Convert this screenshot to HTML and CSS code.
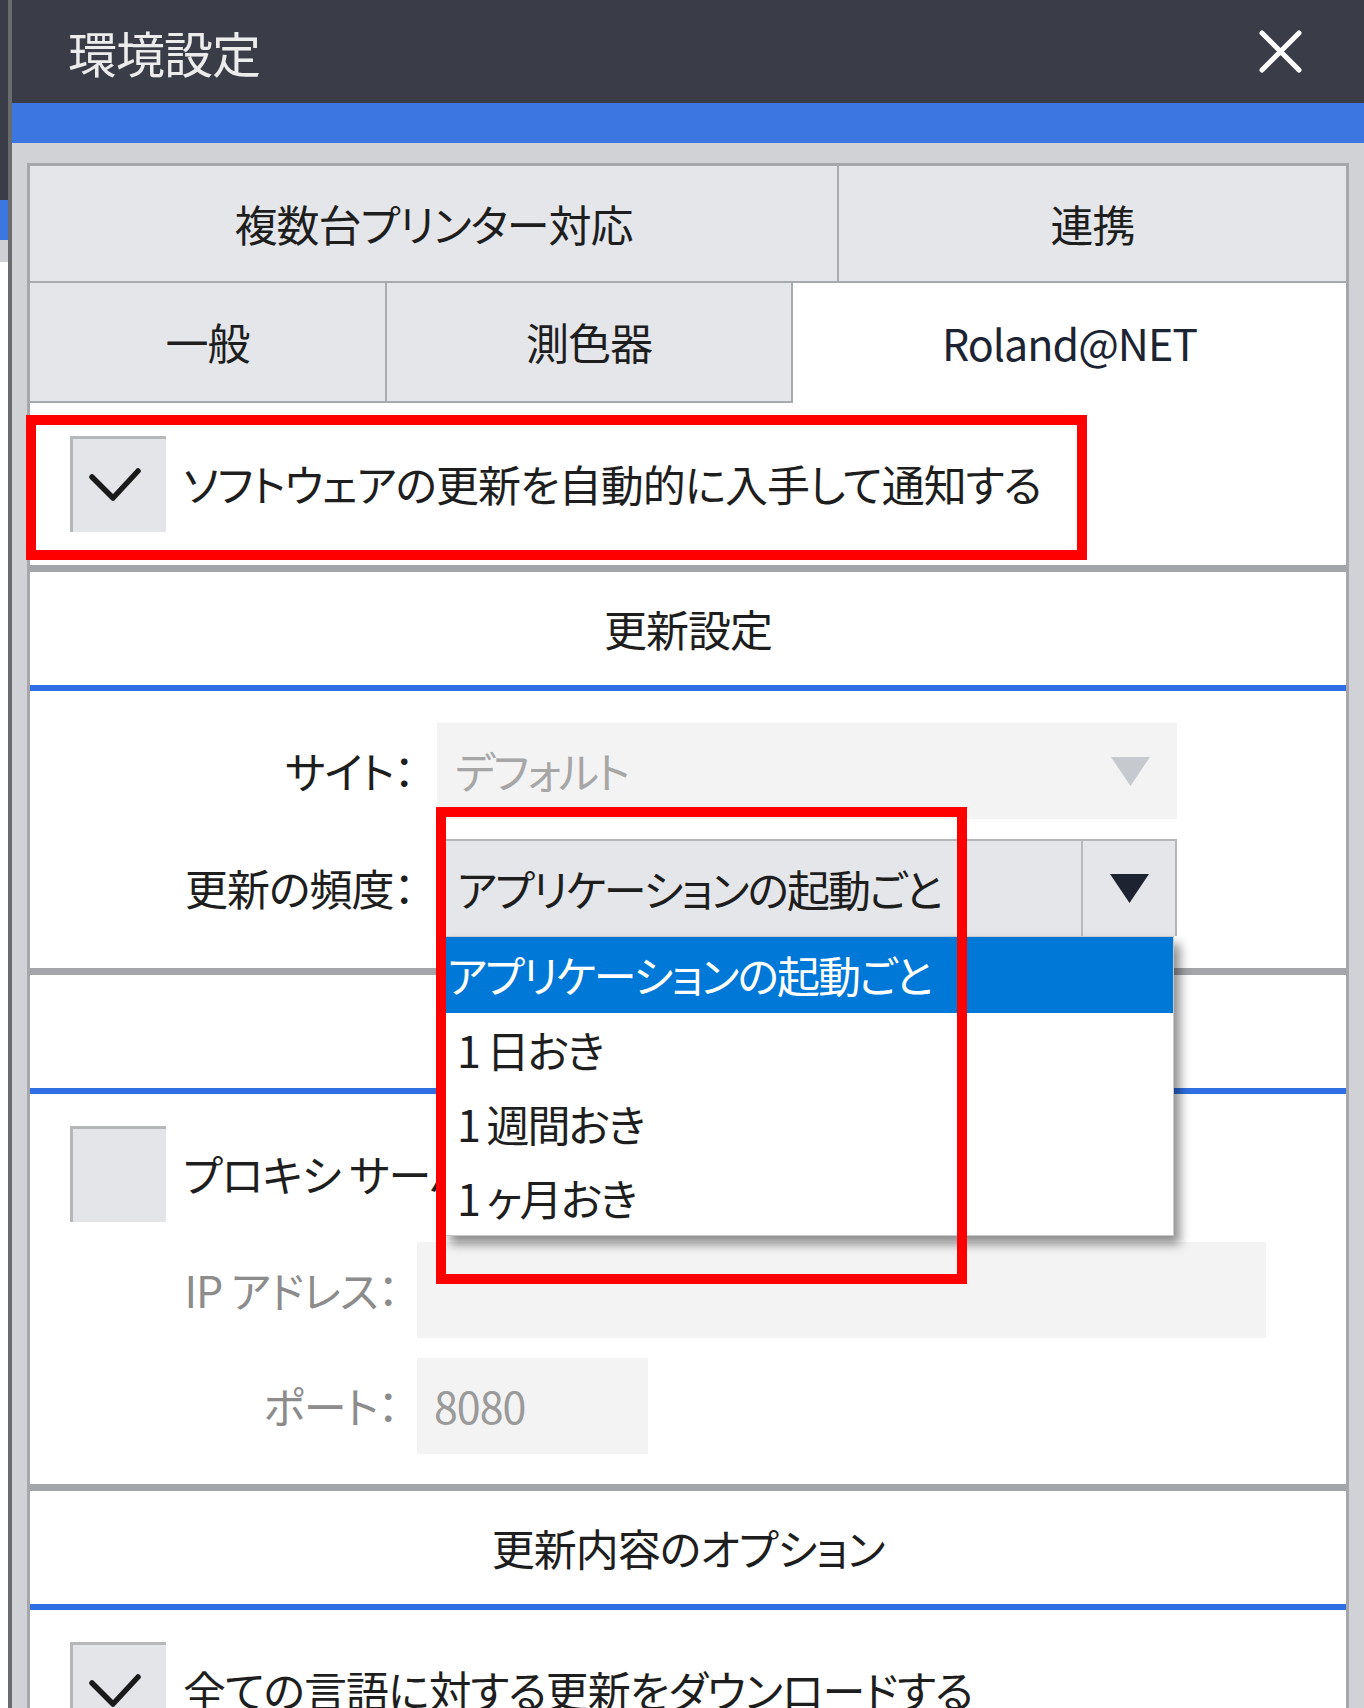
FILE: index.html
```html
<!DOCTYPE html>
<html lang="ja">
<head>
  <meta charset="UTF-8" />
  <title>環境設定</title>
  <link rel="stylesheet" href="styles.css">
</head>
<body>
  <div class="window">
    <div class="titlebar">
      <span class="title">環境設定</span>
      <svg class="close" viewBox="0 0 45 45">
        <path d="M4 4 L41 41 M41 4 L4 41" stroke="#fff" stroke-width="5" stroke-linecap="round"/>
      </svg>
    </div>
    <div class="accent"></div>

    <div class="frame">
      <div class="panel">
        <div class="tab-row row-top">
          <div class="tab">複数台プリンター対応</div>
          <div class="tab">連携</div>
        </div>
        <div class="tab-row row-bottom">
          <div class="tab">一般</div>
          <div class="tab">測色器</div>
          <div class="tab active">Roland@NET</div>
        </div>

        <div class="check-row auto-row">
          <span class="checkbox">
            <svg viewBox="0 0 96 96"><path d="M22 41 L43 62 L68 35" fill="none" stroke="#1a1a1a" stroke-width="5.5" stroke-linecap="round" stroke-linejoin="round"/></svg>
          </span>
          <span class="check-label">ソフトウェアの更新を自動的に入手して通知する</span>
          <div class="marker marker-auto"></div>
        </div>

        <section class="group">
          <h3 class="group-head">更新設定</h3>
          <div class="group-body form form-site">
            <label class="field-label">サイト：</label>
            <div class="select disabled">
              <span class="select-text">デフォルト</span>
              <svg class="arrow" viewBox="0 0 39 29"><polygon points="0,0 39,0 19.5,29" fill="#c6cacf"/></svg>
            </div>

            <label class="field-label">更新の頻度：</label>
            <div class="select-wrap">
              <div class="select open">
                <span class="select-text">アプリケーションの起動ごと</span>
                <span class="select-btn">
                  <svg class="arrow" viewBox="0 0 39 29"><polygon points="0,0 39,0 19.5,29" fill="#1d2330"/></svg>
                </span>
              </div>
              <ul class="dropdown">
                <li class="selected">アプリケーションの起動ごと</li>
                <li>1 日おき</li>
                <li>1 週間おき</li>
                <li>1 ヶ月おき</li>
              </ul>
              <div class="marker marker-freq"></div>
            </div>
          </div>
        </section>

        <section class="group">
          <h3 class="group-head">プロキシ設定</h3>
          <div class="group-body">
            <div class="check-row">
              <span class="checkbox"></span>
              <span class="check-label">プロキシ サーバーを使用する</span>
            </div>
            <div class="form form-proxy">
              <label class="field-label muted">IP アドレス：</label>
              <div class="input"></div>
              <label class="field-label muted">ポート：</label>
              <div class="input short">8080</div>
            </div>
          </div>
        </section>

        <section class="group">
          <h3 class="group-head">更新内容のオプション</h3>
          <div class="group-body">
            <div class="check-row">
              <span class="checkbox">
                <svg viewBox="0 0 96 96"><path d="M22 41 L43 62 L68 35" fill="none" stroke="#1a1a1a" stroke-width="5.5" stroke-linecap="round" stroke-linejoin="round"/></svg>
              </span>
              <span class="check-label">全ての言語に対する更新をダウンロードする</span>
            </div>
          </div>
        </section>
      </div>
    </div>
  </div>
</body>
</html>
```

FILE: styles.css
```css
* { box-sizing: border-box; }

html,
body {
  margin: 0;
  height: 1708px;
  overflow: hidden;
}

body {
  display: flex;
  background: linear-gradient(#3a3d47 0 200px, #3b76e1 200px 240px, #cfd0d3 240px 262px, #fff 262px);
  font-family: "Noto Sans CJK JP", "Noto Sans", sans-serif;
  font-feature-settings: "palt";
  font-size: 43px;
  letter-spacing: -1px;
  line-height: 1.2;
  color: #1e1e1e;
}

.window {
  flex: 1;
  margin-left: 8px;
  border-left: 4px solid #6a6b6e;
  display: flex;
  flex-direction: column;
}

.titlebar {
  flex: none;
  height: 103px;
  background: #3a3d47;
  display: flex;
  align-items: center;
  justify-content: space-between;
  padding: 0 61px 0 56px;
}

.title {
  color: #ececec;
  font-size: 49px;
  line-height: 1;
}

.close {
  width: 45px;
  height: 45px;
}

.accent {
  flex: none;
  height: 40px;
  background: #3b76e1;
}

.frame {
  flex: 1 0 auto;
  background: #d1d2d5;
  padding: 20px 15px 0;
}

.panel {
  background: #fff;
  border: 3px solid #a5a7aa;
  border-bottom: 0;
  min-height: 100%;
}

/* tabs */
.tab-row {
  display: grid;
}

.row-top {
  grid-template-columns: 809px 1fr;
  height: 117px;
}

.row-bottom {
  grid-template-columns: 357px 406px 1fr;
  height: 120px;
}

.tab {
  display: flex;
  align-items: center;
  justify-content: center;
  background: #e4e6e9;
  border-right: 2px solid #a8aaad;
  border-bottom: 2px solid #a8aaad;
}

.tab:last-child {
  border-right: 0;
}

.tab.active {
  background: #fff;
  border-bottom: 0;
  color: #1c2433;
}

/* checkboxes */
.check-row {
  position: relative;
  display: flex;
  align-items: center;
  gap: 17px;
  padding-left: 40px;
}

.auto-row {
  height: 162px;
}

.checkbox {
  flex: none;
  width: 96px;
  height: 96px;
  background: #e4e5e8;
  border-top: 3px solid #b6b7b9;
  border-left: 3px solid #b6b7b9;
}

.checkbox svg {
  display: block;
  width: 96px;
  height: 96px;
  margin: -3px 0 0 -3px;
}

.check-label {
  white-space: nowrap;
}

/* groups */
.group {
  border-top: 7px solid #a3a5a8;
}

.group-head {
  margin: 0;
  height: 119px;
  display: flex;
  align-items: center;
  justify-content: center;
  font-size: 43px;
  font-weight: 400;
  border-bottom: 6px solid #2f6fe3;
}

.group-body {
  padding: 32px 0 30px;
  display: flex;
  flex-direction: column;
  gap: 20px;
}

.form {
  display: grid;
  align-items: center;
  row-gap: 20px;
}

.form-site {
  grid-template-columns: 384px 740px;
  column-gap: 23px;
  padding-bottom: 32px;
}

.form-proxy {
  grid-template-columns: 368px 849px;
  column-gap: 19px;
}

.field-label {
  text-align: right;
  white-space: nowrap;
}

.field-label.muted {
  color: #8c8c8c;
}

.select {
  height: 96px;
  display: flex;
  align-items: center;
  justify-content: space-between;
  padding-left: 18px;
  background: #f3f3f3;
}

.select.disabled {
  color: #a6a6a6;
  padding-right: 27px;
}

.arrow {
  width: 39px;
  height: 29px;
}

.select-wrap {
  position: relative;
}

.select.open {
  height: 97px;
  background: #e5e6e9;
  border-top: 2px solid #b5b6b8;
  border-right: 2px solid #b5b6b8;
  padding-left: 20px;
}

.select-btn {
  align-self: stretch;
  width: 94px;
  display: flex;
  align-items: center;
  justify-content: center;
  border-left: 2px solid #b9babc;
}

.dropdown {
  position: absolute;
  top: 100%;
  left: 7px;
  width: 730px;
  margin: 0;
  padding: 0;
  list-style: none;
  background: #fff;
  border: 1px solid #c8c8c8;
  box-shadow: 6px 8px 10px rgba(0, 0, 0, 0.45);
  z-index: 5;
}

.dropdown li {
  height: 74px;
  display: flex;
  align-items: center;
  padding-left: 12px;
  white-space: nowrap;
}

.dropdown li.selected {
  height: 76px;
  background: #0078d7;
  color: #fff;
  padding-left: 2px;
}

.select-text,
.dropdown li {
  letter-spacing: -2px;
}

.input {
  height: 96px;
  background: #f3f3f3;
  display: flex;
  align-items: center;
  padding-left: 17px;
  color: #9a9a9a;
}

.input.short {
  width: 231px;
}

/* red annotation frames */
.marker {
  position: absolute;
  border: 10px solid #ff0000;
  pointer-events: none;
  z-index: 10;
}

.marker-auto {
  top: 12px;
  left: -4px;
  width: 1061px;
  height: 145px;
}

.marker-freq {
  top: -32px;
  left: -1px;
  width: 531px;
  height: 477px;
}
```
